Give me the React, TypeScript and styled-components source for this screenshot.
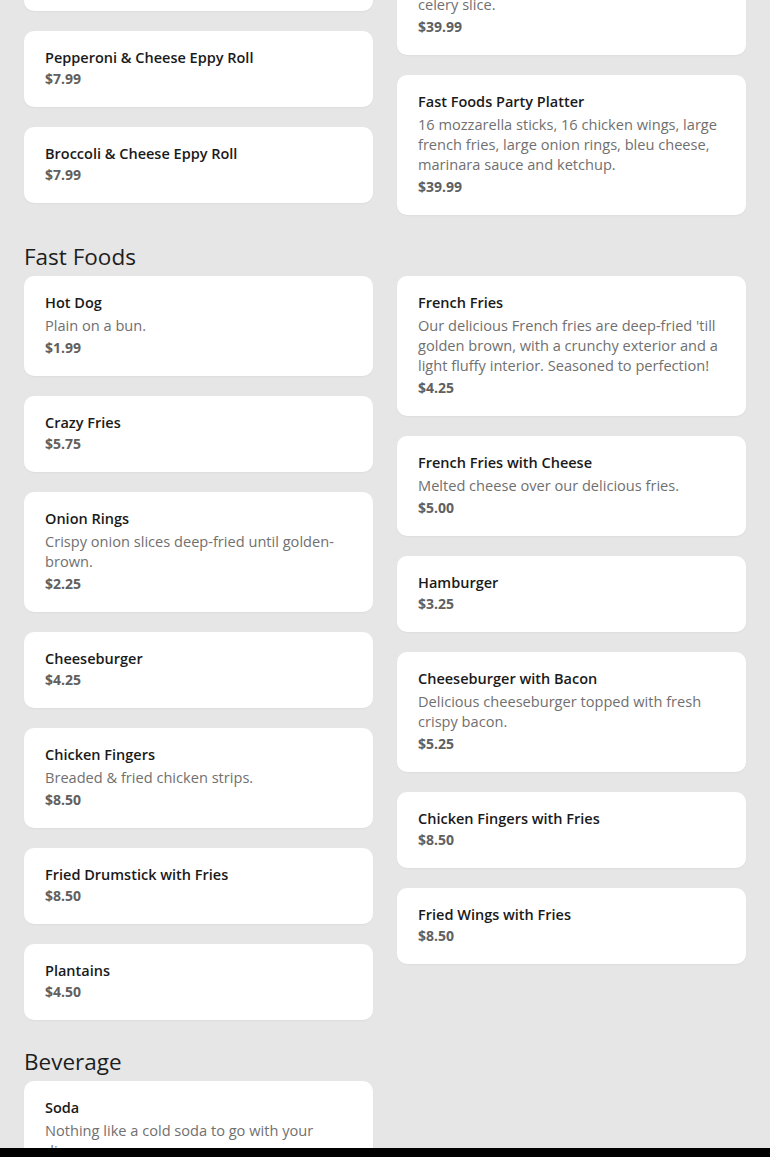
import styled, { createGlobalStyle } from "styled-components"

const GlobalStyle = createGlobalStyle`
  html, body {
    margin: 0;
    padding: 0;
    background: #e6e6e6;
    font-family: "Open Sans", "Liberation Sans", sans-serif;
    overflow: hidden;
  }
`

interface Item {
  name: string
  desc?: string
  price: string
}

interface Section {
  title: string
  left: Item[]
  right: Item[]
}

const sections: Section[] = [
  {
    title: "Party Platters",
    left: [
      { name: "Pizza Eppy Roll", price: "$7.99" },
      { name: "Pepperoni & Cheese Eppy Roll", price: "$7.99" },
      { name: "Broccoli & Cheese Eppy Roll", price: "$7.99" },
    ],
    right: [
      {
        name: "Wings Party Platter",
        desc: "50 chicken wings, bleu cheese, carrot and celery slice.",
        price: "$39.99",
      },
      {
        name: "Fast Foods Party Platter",
        desc: "16 mozzarella sticks, 16 chicken wings, large french fries, large onion rings, bleu cheese, marinara sauce and ketchup.",
        price: "$39.99",
      },
    ],
  },
  {
    title: "Fast Foods",
    left: [
      { name: "Hot Dog", desc: "Plain on a bun.", price: "$1.99" },
      { name: "Crazy Fries", price: "$5.75" },
      { name: "Onion Rings", desc: "Crispy onion slices deep-fried until golden-brown.", price: "$2.25" },
      { name: "Cheeseburger", price: "$4.25" },
      { name: "Chicken Fingers", desc: "Breaded & fried chicken strips.", price: "$8.50" },
      { name: "Fried Drumstick with Fries", price: "$8.50" },
      { name: "Plantains", price: "$4.50" },
    ],
    right: [
      {
        name: "French Fries",
        desc: "Our delicious French fries are deep-fried 'till golden brown, with a crunchy exterior and a light fluffy interior. Seasoned to perfection!",
        price: "$4.25",
      },
      { name: "French Fries with Cheese", desc: "Melted cheese over our delicious fries.", price: "$5.00" },
      { name: "Hamburger", price: "$3.25" },
      { name: "Cheeseburger with Bacon", desc: "Delicious cheeseburger topped with fresh crispy bacon.", price: "$5.25" },
      { name: "Chicken Fingers with Fries", price: "$8.50" },
      { name: "Fried Wings with Fries", price: "$8.50" },
    ],
  },
  {
    title: "Beverage",
    left: [
      { name: "Soda", desc: "Nothing like a cold soda to go with your dinner.", price: "$1.50" },
    ],
    right: [],
  },
]

const Viewport = styled.div`
  height: 1157px;
  overflow: hidden;
`

const Menu = styled.main`
  margin-top: -126px;
  padding: 0 24px 40px;
`

const Block = styled.section`
  padding-top: 24px;
`

const Heading = styled.h2`
  margin: 1px 0 3px;
  font-size: 22.5px;
  line-height: 33px;
  font-weight: 400;
  color: #1e1e1e;
`

const Columns = styled.div`
  display: grid;
  grid-template-columns: 1fr 1fr;
  gap: 24px;
  align-items: start;
`

const Column = styled.div`
  display: flex;
  flex-direction: column;
  gap: 20px;
`

const Card = styled.div`
  background: #fff;
  border-radius: 10px;
  padding: 17px 21px 18px;
  box-shadow: 0 1px 2px rgba(0, 0, 0, 0.04);
`

const Name = styled.div`
  margin-bottom: 1px;
  font-size: 14.5px;
  line-height: 20px;
  font-weight: 600;
  color: #1a1a1a;
`

const Desc = styled.div`
  margin: 2px 0 3px;
  font-size: 14.6px;
  line-height: 20px;
  color: #707070;
`

const Price = styled.div`
  font-size: 14px;
  line-height: 20px;
  font-weight: 700;
  color: #606060;
`

const BottomBar = styled.div`
  position: fixed;
  left: 0;
  right: 0;
  bottom: 0;
  height: 9px;
  background: #000;
`

function MenuCard({ item }: { item: Item }) {
  return (
    <Card>
      <Name>{item.name}</Name>
      {item.desc && <Desc>{item.desc}</Desc>}
      <Price>{item.price}</Price>
    </Card>
  )
}

export default function App() {
  return (
    <>
      <GlobalStyle />
      <Viewport>
        <Menu>
          {sections.map((s) => (
            <Block key={s.title}>
              <Heading>{s.title}</Heading>
              <Columns>
                <Column>
                  {s.left.map((i) => (
                    <MenuCard key={i.name} item={i} />
                  ))}
                </Column>
                <Column>
                  {s.right.map((i) => (
                    <MenuCard key={i.name} item={i} />
                  ))}
                </Column>
              </Columns>
            </Block>
          ))}
        </Menu>
      </Viewport>
      <BottomBar />
    </>
  )
}
